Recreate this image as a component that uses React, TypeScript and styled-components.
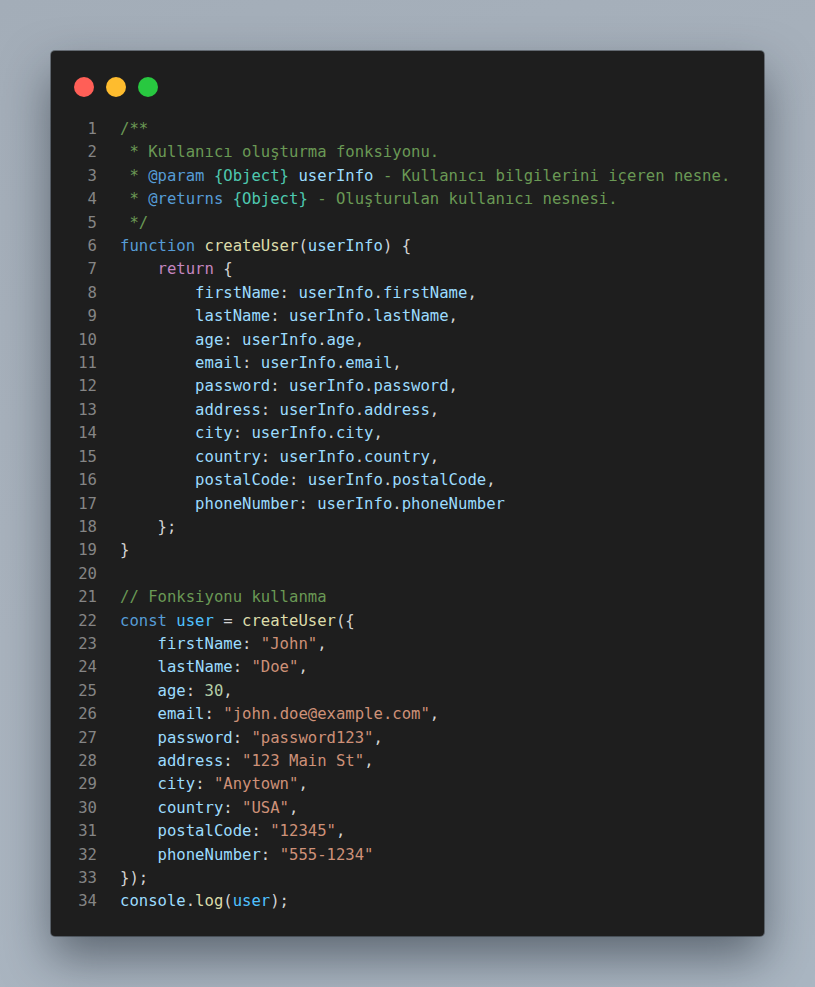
import React from "react";
import styled, { createGlobalStyle } from "styled-components";

const Global = createGlobalStyle`
  html, body { margin: 0; padding: 0; }
  body { background: #a7b2be; }
`;

const Page = styled.div`
  min-height: 987px;
  box-sizing: border-box;
  padding: 51px 51px;
  background: linear-gradient(160deg, #a3adb8 0%, #a9b3be 50%, #aab6c2 100%);
`;

const Window = styled.div`
  width: 713px;
  height: 885px;
  box-sizing: border-box;
  background: #1e1e1e;
  border-radius: 4px;
  padding: 26px 23px;
  box-shadow: 0 22px 48px rgba(20, 28, 38, 0.5), 0 0 0 1px rgba(0, 0, 0, 0.35);
  display: flex;
  flex-direction: column;
  gap: 21px;
`;

const Dots = styled.div`
  display: flex;
  gap: 12px;
`;

const Dot = styled.span<{ $c: string }>`
  width: 20px;
  height: 20px;
  border-radius: 50%;
  background: ${(p) => p.$c};
  display: block;
`;

const Code = styled.div`
  display: flex;
  flex-direction: column;
  font-family: "DejaVu Sans Mono", "Liberation Mono", monospace;
  font-size: 15.6px;
  line-height: 23.4px;
`;

const Row = styled.div`
  display: grid;
  grid-template-columns: 23px 1fr;
  column-gap: 23px;
  white-space: pre;
`;

const Num = styled.span`
  color: #858585;
  text-align: right;
`;

const colors: Record<string, string> = {
  c: "#6a9955",
  k: "#569cd6",
  r: "#c586c0",
  f: "#dcdcaa",
  v: "#9cdcfe",
  u: "#4fc1ff",
  t: "#4ec9b0",
  s: "#ce9178",
  n: "#b5cea8",
  p: "#d4d4d4",
};

const Tok = styled.span<{ $k: string }>`
  color: ${(p) => colors[p.$k]};
`;

type T = [string, string];

const prop = (indent: string, name: string, field: string, last = false): T[] => [
  ["p", indent],
  ["v", name],
  ["p", ": "],
  ["v", "userInfo"],
  ["p", "."],
  ["v", field],
  ["p", last ? "" : ","],
];

const sprop = (name: string, val: T, last = false): T[] => [
  ["p", "    "],
  ["v", name],
  ["p", ": "],
  val,
  ["p", last ? "" : ","],
];

const lines: T[][] = [
  [["c", "/**"]],
  [["c", " * Kullanıcı oluşturma fonksiyonu."]],
  [
    ["c", " * "],
    ["k", "@param"],
    ["c", " "],
    ["t", "{Object}"],
    ["c", " "],
    ["v", "userInfo"],
    ["c", " - Kullanıcı bilgilerini içeren nesne."],
  ],
  [
    ["c", " * "],
    ["k", "@returns"],
    ["c", " "],
    ["t", "{Object}"],
    ["c", " - Oluşturulan kullanıcı nesnesi."],
  ],
  [["c", " */"]],
  [
    ["k", "function"],
    ["p", " "],
    ["f", "createUser"],
    ["p", "("],
    ["v", "userInfo"],
    ["p", ") {"],
  ],
  [
    ["p", "    "],
    ["r", "return"],
    ["p", " {"],
  ],
  prop("        ", "firstName", "firstName"),
  prop("        ", "lastName", "lastName"),
  prop("        ", "age", "age"),
  prop("        ", "email", "email"),
  prop("        ", "password", "password"),
  prop("        ", "address", "address"),
  prop("        ", "city", "city"),
  prop("        ", "country", "country"),
  prop("        ", "postalCode", "postalCode"),
  prop("        ", "phoneNumber", "phoneNumber", true),
  [["p", "    };"]],
  [["p", "}"]],
  [["p", " "]],
  [["c", "// Fonksiyonu kullanma"]],
  [
    ["k", "const"],
    ["p", " "],
    ["u", "user"],
    ["p", " = "],
    ["f", "createUser"],
    ["p", "({"],
  ],
  sprop("firstName", ["s", '"John"']),
  sprop("lastName", ["s", '"Doe"']),
  sprop("age", ["n", "30"]),
  sprop("email", ["s", '"john.doe@example.com"']),
  sprop("password", ["s", '"password123"']),
  sprop("address", ["s", '"123 Main St"']),
  sprop("city", ["s", '"Anytown"']),
  sprop("country", ["s", '"USA"']),
  sprop("postalCode", ["s", '"12345"']),
  sprop("phoneNumber", ["s", '"555-1234"'], true),
  [["p", "});"]],
  [
    ["v", "console"],
    ["p", "."],
    ["f", "log"],
    ["p", "("],
    ["u", "user"],
    ["p", ");"],
  ],
];

export default function App() {
  return (
    <>
      <Global />
      <Page>
        <Window>
          <Dots>
            <Dot $c="#ff5f57" />
            <Dot $c="#febc2e" />
            <Dot $c="#28c840" />
          </Dots>
          <Code>
            {lines.map((toks, i) => (
              <Row key={i}>
                <Num>{i + 1}</Num>
                <span>
                  {toks.map(([k, t], j) => (
                    <Tok key={j} $k={k}>
                      {t}
                    </Tok>
                  ))}
                </span>
              </Row>
            ))}
          </Code>
        </Window>
      </Page>
    </>
  );
}
